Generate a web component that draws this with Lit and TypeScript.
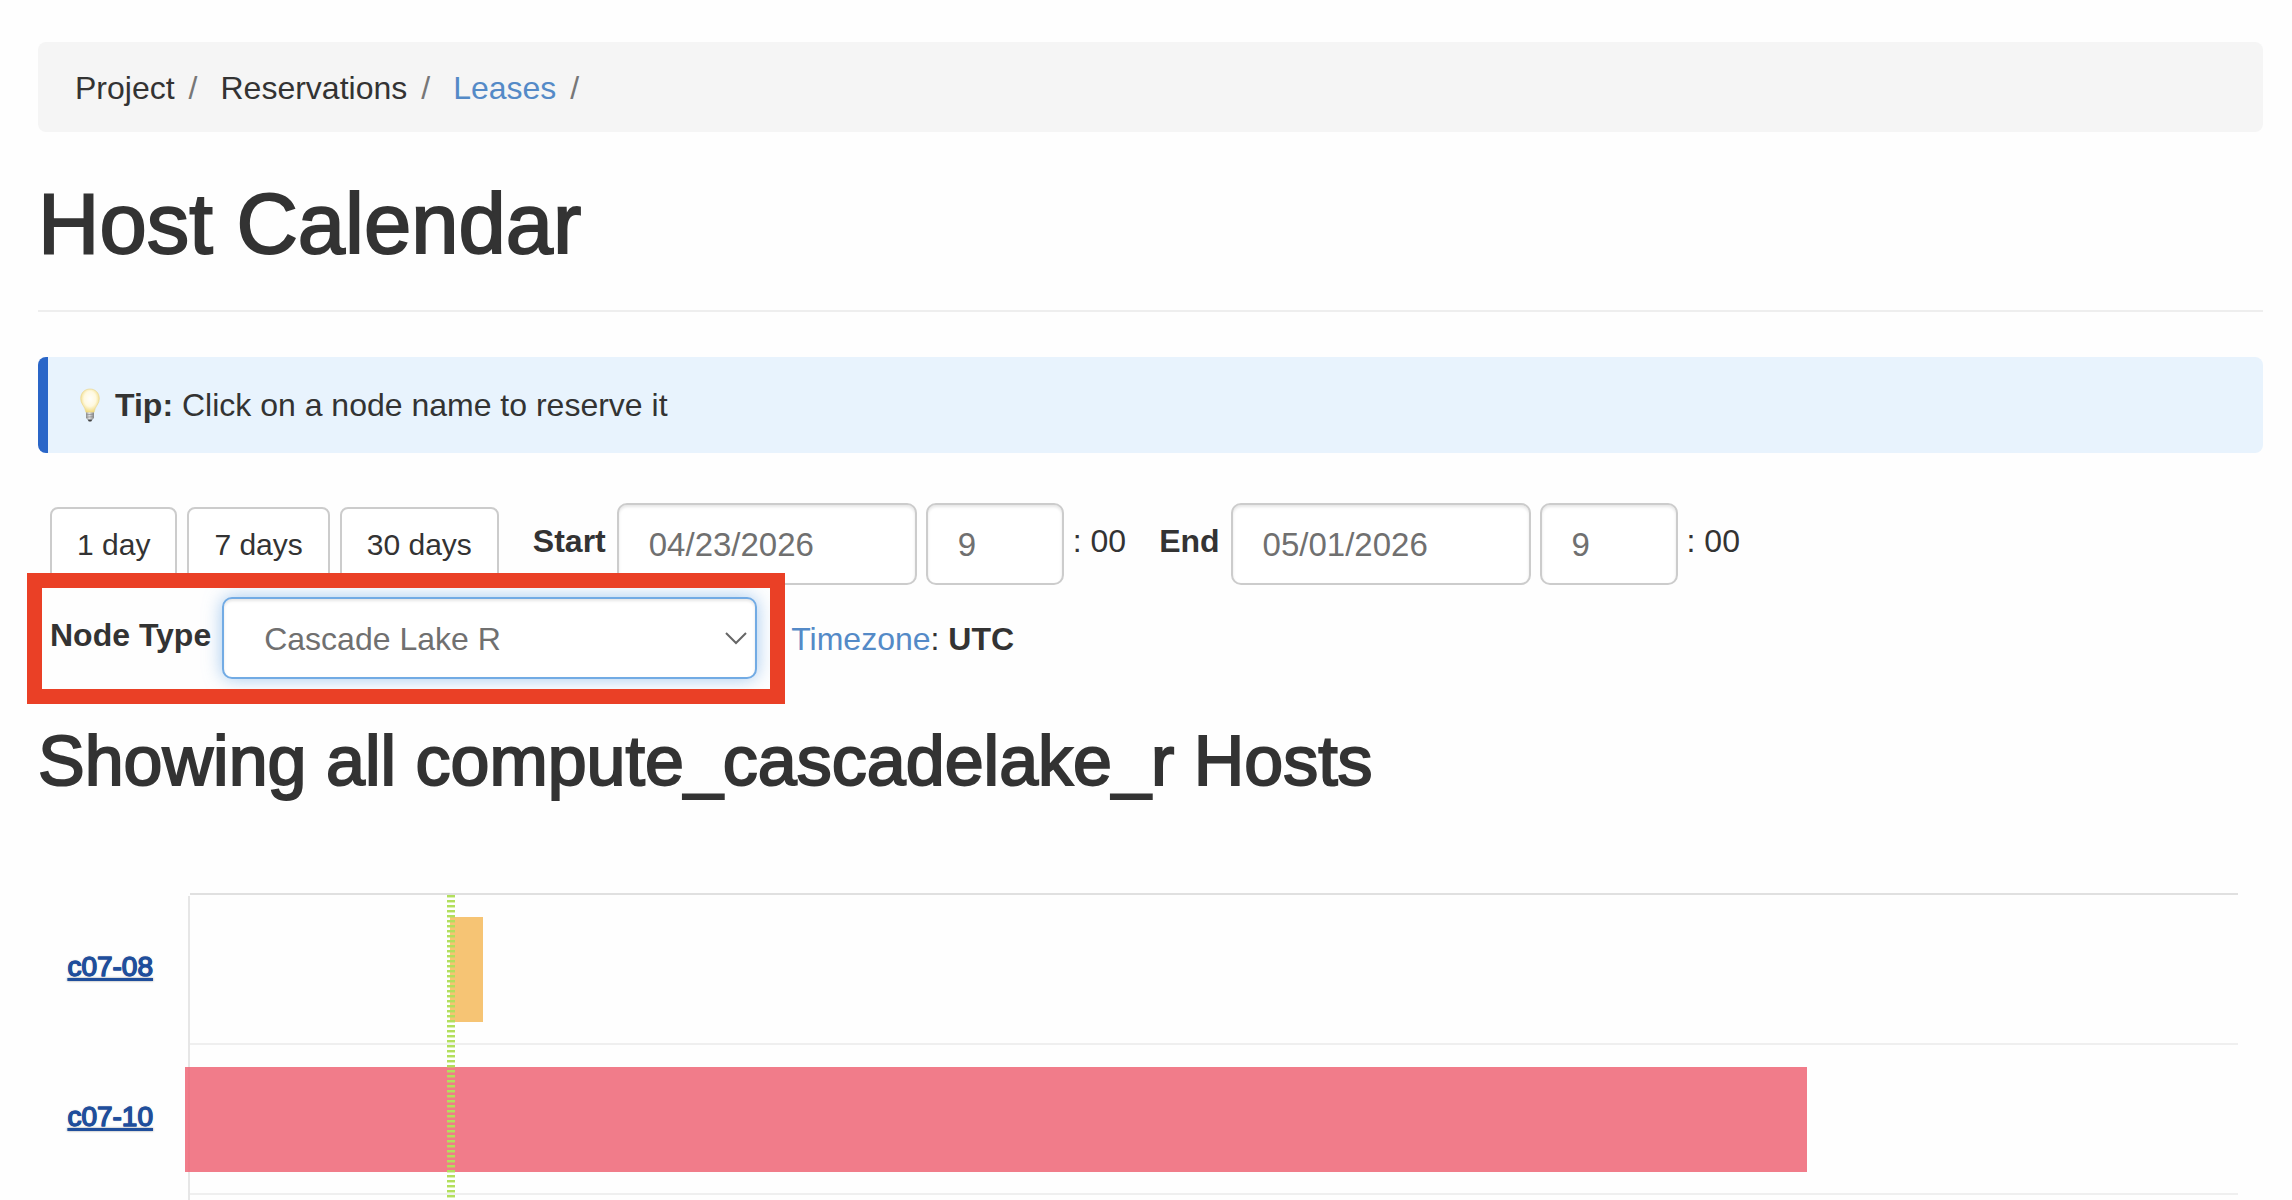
import { LitElement, html, css } from "lit";
import { customElement, property, state } from "lit/decorators.js";

interface Reservation {
  start: number;
  length: number;
  kind: "pending" | "active";
}

interface HostRow {
  name: string;
  reservations: Reservation[];
}

// Positions are percentages of the visible time range.
const HOSTS: HostRow[] = [
  { name: "c07-08", reservations: [{ start: 12.7, length: 1.63, kind: "pending" }] },
  { name: "c07-10", reservations: [{ start: -0.24, length: 79.2, kind: "active" }] },
];

@customElement("host-timeline")
export class HostTimeline extends LitElement {
  @property({ attribute: false }) hosts: HostRow[] = [];
  @property({ type: Number }) now = 0;

  static styles = css`
    :host {
      display: block;
      padding-right: 25px;
    }
    .chart {
      display: grid;
      grid-template-columns: 152px 1fr;
    }
    .labels,
    .rows {
      list-style: none;
      margin: 0;
      padding: 0;
    }
    .labels {
      padding-top: 3px;
    }
    .label {
      box-sizing: border-box;
      height: 150px;
      padding: 0 37px 8px 0;
      display: flex;
      align-items: center;
      justify-content: flex-end;
      font-size: 28px;
    }
    .host {
      color: #1f4e9c;
      text-decoration: underline;
      text-decoration-thickness: 3px;
      text-underline-offset: 2px;
      -webkit-text-stroke: 1px #1f4e9c;
      text-shadow: 0 0 2px #999;
    }
    .plot {
      position: relative;
      border-top: 2px solid #e0e0e0;
      padding-bottom: 6px;
    }
    .plot::before {
      content: "";
      position: absolute;
      left: -2px;
      top: 1px;
      bottom: 0;
      width: 2px;
      background: #e6e6e6;
    }
    .row {
      box-sizing: border-box;
      position: relative;
      height: 150px;
      border-bottom: 2px solid #efefef;
    }
    .bar {
      position: absolute;
      top: 22px;
      height: 105px;
    }
    .pending {
      background: rgba(244, 186, 92, 0.85);
    }
    .active {
      background: rgba(239, 104, 121, 0.87);
    }
    .now {
      position: absolute;
      top: 0;
      bottom: 0;
      width: 8px;
      background: repeating-linear-gradient(
        to bottom,
        #b2df5c 0 2px,
        rgba(178, 223, 92, 0.45) 2px 3px,
        transparent 3px 5px
      );
    }
  `;

  render() {
    return html`
      <div class="chart">
        <ul class="labels">
          ${this.hosts.map(
            (h) => html`<li class="label"><a class="host" href="#${h.name}">${h.name}</a></li>`,
          )}
        </ul>
        <div class="plot">
          <ul class="rows">
            ${this.hosts.map(
              (h) => html`<li class="row">
                ${h.reservations.map(
                  (r) => html`<div
                    class="bar ${r.kind}"
                    style="left:${r.start}%;width:${r.length}%"
                  ></div>`,
                )}
              </li>`,
            )}
          </ul>
          <div class="now" style="left:${this.now}%"></div>
        </div>
      </div>
    `;
  }
}

@customElement("app-root")
export class AppRoot extends LitElement {
  @state() private start = "04/23/2026";
  @state() private end = "05/01/2026";

  static styles = css`
    :host {
      display: block;
      box-sizing: border-box;
      padding: 42px 29px 0 38px;
      background: #fefefe;
      color: #333;
      font-family: "Helvetica Neue", "Liberation Sans", Arial, sans-serif;
      font-size: 32px;
    }
    a {
      color: #548ac7;
      text-decoration: none;
    }
    .breadcrumb {
      display: flex;
      flex-wrap: wrap;
      list-style: none;
      margin: 0;
      padding: 2px 37px 0;
      border-radius: 8px;
      background: #f5f5f5;
      line-height: 88px;
    }
    .breadcrumb li::after {
      content: "/";
      padding: 0 23px 0 14px;
      color: #777;
    }
    h1,
    h2 {
      margin: 0;
      font-weight: 400;
    }
    h1 {
      margin-top: 46px;
      padding-bottom: 40px;
      border-bottom: 2px solid #eee;
      font-size: 85px;
      line-height: 92px;
      -webkit-text-stroke: 2px #333;
    }
    h2 {
      margin: 42px 0 94px;
      font-size: 70px;
      line-height: 76px;
      -webkit-text-stroke: 2px #333;
    }
    .tip {
      display: flex;
      align-items: center;
      margin: 45px 0 50px;
      padding: 0 32px;
      border-left: 10px solid #2a66c8;
      border-radius: 8px;
      background: #e8f3fd;
      line-height: 96px;
    }
    .bulb {
      width: 20px;
      height: 34px;
      margin-right: 15px;
    }
    .tip p {
      margin: 0;
    }
    .toolbar {
      display: flex;
      flex-direction: column;
      gap: 12px;
      padding-left: 12px;
    }
    .line {
      display: flex;
      flex-wrap: wrap;
      align-items: flex-start;
    }
    .presets {
      display: flex;
      gap: 10px;
      padding-top: 4px;
      margin-right: 34px;
    }
    button {
      height: 76px;
      padding: 0 25px;
      border: 2px solid #ccc;
      border-radius: 8px;
      background: #fff;
      color: #333;
      font-family: inherit;
      font-size: 30px;
    }
    .group {
      display: flex;
      gap: 9px;
      margin-right: 33px;
    }
    label,
    .minutes {
      line-height: 76px;
    }
    label {
      margin-right: 2px;
      font-weight: 700;
    }
    input,
    select {
      box-sizing: border-box;
      height: 82px;
      margin: 0;
      border: 2px solid #ccc;
      border-radius: 10px;
      background: #fff;
      color: #707070;
      font-family: inherit;
      box-shadow: inset 0 2px 3px rgba(0, 0, 0, 0.1);
      outline: none;
    }
    input {
      padding: 2px 30px 0;
      font-size: 33px;
    }
    .date {
      width: 300px;
    }
    .hour {
      width: 138px;
    }
    .node {
      position: relative;
      display: flex;
      gap: 9px;
      margin-right: 34px;
    }
    .node::after {
      content: "";
      position: absolute;
      inset: -24px -28px -25px -23px;
      border: 15px solid #ea4026;
      pointer-events: none;
    }
    .picker {
      display: grid;
      align-items: center;
    }
    .picker > * {
      grid-area: 1 / 1;
    }
    select {
      width: 535px;
      padding: 2px 60px 0 40px;
      border-color: #72abe4;
      font-size: 32px;
      appearance: none;
      box-shadow:
        inset 0 2px 3px rgba(0, 0, 0, 0.1),
        0 0 18px rgba(102, 165, 228, 0.6);
    }
    .chevron {
      justify-self: end;
      width: 24px;
      height: 14px;
      margin-right: 9px;
      pointer-events: none;
    }
    .zone {
      line-height: 84px;
    }
  `;

  render() {
    return html`
      <nav aria-label="Breadcrumb">
        <ol class="breadcrumb">
          <li>Project</li>
          <li>Reservations</li>
          <li><a href="#leases">Leases</a></li>
        </ol>
      </nav>
      <h1>Host Calendar</h1>
      <div class="tip">
        <svg class="bulb" viewBox="0 0 20 34" aria-hidden="true">
          <defs>
            <radialGradient id="glow" cx="50%" cy="42%" r="58%">
              <stop offset="0" stop-color="#fffefa" />
              <stop offset="0.55" stop-color="#fff9e0" />
              <stop offset="1" stop-color="#f0d878" />
            </radialGradient>
            <linearGradient id="metal">
              <stop offset="0" stop-color="#8c8c8c" />
              <stop offset="0.4" stop-color="#e6e6e6" />
              <stop offset="1" stop-color="#858585" />
            </linearGradient>
          </defs>
          <path
            d="M10 1C4.600 1 .7 5 .7 10.500c0 4.500 2.600 6.700 4 9.800.7 1.600.8 3.200 1.300 4.200h8c.5-1 .6-2.600 1.300-4.200 1.400-3.100 4-5.300 4-9.800C19.300 5 15.400 1 10 1z"
            fill="url(#glow)"
            stroke="#e8d48c"
            stroke-width="0.600"
          />
          <path d="M6 24.500h8v5.500l-1.500 1.500h-5L6 30z" fill="url(#metal)" />
          <path d="M6 26.800l8-.6M6 29.200l8-.6" stroke="#8a8a8a" stroke-width="0.700" />
          <path d="M7.500 31.500h5L11.200 33.500H8.800z" fill="#444" />
        </svg>
        <p><strong>Tip:</strong> Click on a node name to reserve it</p>
      </div>
      <form class="toolbar" @submit=${(e: Event) => e.preventDefault()}>
        <div class="line">
          <div class="presets">
            <button type="button">1 day</button>
            <button type="button">7 days</button>
            <button type="button">30 days</button>
          </div>
          <div class="group">
            <label for="start">Start</label>
            <input class="date" id="start" type="text" .value=${this.start} />
            <input class="hour" type="text" aria-label="Start hour" .value=${"9"} />
            <span class="minutes">: 00</span>
          </div>
          <div class="group">
            <label for="end">End</label>
            <input class="date" id="end" type="text" .value=${this.end} />
            <input class="hour" type="text" aria-label="End hour" .value=${"9"} />
            <span class="minutes">: 00</span>
          </div>
        </div>
        <div class="line">
          <div class="node">
            <label for="node-type">Node Type</label>
            <div class="picker">
              <select id="node-type">
                <option>Cascade Lake R</option>
              </select>
              <svg class="chevron" viewBox="0 0 24 14" aria-hidden="true">
                <path d="M2 2l10 10L22 2" fill="none" stroke="#666" stroke-width="2" />
              </svg>
            </div>
          </div>
          <div class="zone"><a href="#timezone">Timezone</a>: <strong>UTC</strong></div>
        </div>
      </form>
      <h2>Showing all compute_cascadelake_r Hosts</h2>
      <host-timeline .hosts=${HOSTS} .now=${12.55}></host-timeline>
    `;
  }
}
